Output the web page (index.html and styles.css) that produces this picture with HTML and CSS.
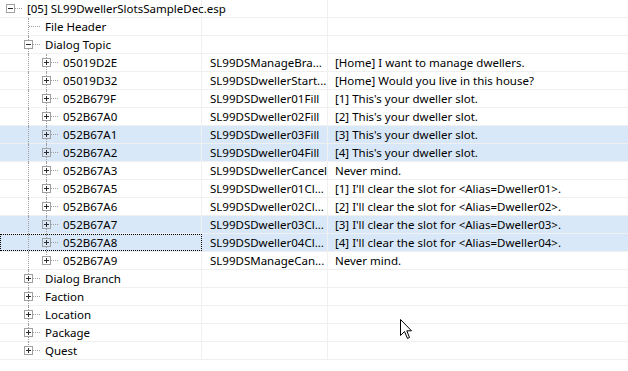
FILE: index.html
```html
<!DOCTYPE html>
<html lang="en">
<head>
    <meta charset="UTF-8">
    <title>SL99DwellerSlotsSampleDec.esp</title>
    <link rel="stylesheet" href="styles.css">
</head>
<body>

<div class="tree-view">
    <div class="row">
        <div class="c tree"><span class="node root"><span class="box minus"></span></span><span class="lbl">[05] SL99DwellerSlotsSampleDec.esp</span></div>
        <div class="c"></div><div class="c"></div>
    </div>
    <div class="row">
        <div class="c tree"><span class="ind"></span><span class="node"></span><span class="lbl">File Header</span></div>
        <div class="c"></div><div class="c"></div>
    </div>
    <div class="row">
        <div class="c tree"><span class="ind"></span><span class="node"><span class="box minus"></span></span><span class="lbl">Dialog Topic</span></div>
        <div class="c"></div><div class="c"></div>
    </div>

    <div class="row">
        <div class="c tree"><span class="ind"></span><span class="ind line"></span><span class="node"><span class="box"></span></span><span class="lbl">05019D2E</span></div>
        <div class="c">SL99DSManageBra...</div><div class="c">[Home] I want to manage dwellers.</div>
    </div>
    <div class="row">
        <div class="c tree"><span class="ind"></span><span class="ind line"></span><span class="node"><span class="box"></span></span><span class="lbl">05019D32</span></div>
        <div class="c">SL99DSDwellerStart...</div><div class="c">[Home] Would you live in this house?</div>
    </div>
    <div class="row">
        <div class="c tree"><span class="ind"></span><span class="ind line"></span><span class="node"><span class="box"></span></span><span class="lbl">052B679F</span></div>
        <div class="c">SL99DSDweller01Fill</div><div class="c">[1] This's your dweller slot.</div>
    </div>
    <div class="row">
        <div class="c tree"><span class="ind"></span><span class="ind line"></span><span class="node"><span class="box"></span></span><span class="lbl">052B67A0</span></div>
        <div class="c">SL99DSDweller02Fill</div><div class="c">[2] This's your dweller slot.</div>
    </div>
    <div class="row sel">
        <div class="c tree"><span class="ind"></span><span class="ind line"></span><span class="node"><span class="box"></span></span><span class="lbl">052B67A1</span></div>
        <div class="c">SL99DSDweller03Fill</div><div class="c">[3] This's your dweller slot.</div>
    </div>
    <div class="row sel">
        <div class="c tree"><span class="ind"></span><span class="ind line"></span><span class="node"><span class="box"></span></span><span class="lbl">052B67A2</span></div>
        <div class="c">SL99DSDweller04Fill</div><div class="c">[4] This's your dweller slot.</div>
    </div>
    <div class="row">
        <div class="c tree"><span class="ind"></span><span class="ind line"></span><span class="node"><span class="box"></span></span><span class="lbl">052B67A3</span></div>
        <div class="c">SL99DSDwellerCancel</div><div class="c">Never mind.</div>
    </div>
    <div class="row">
        <div class="c tree"><span class="ind"></span><span class="ind line"></span><span class="node"><span class="box"></span></span><span class="lbl">052B67A5</span></div>
        <div class="c">SL99DSDweller01Cl...</div><div class="c">[1] I'll clear the slot for &lt;Alias=Dweller01&gt;.</div>
    </div>
    <div class="row">
        <div class="c tree"><span class="ind"></span><span class="ind line"></span><span class="node"><span class="box"></span></span><span class="lbl">052B67A6</span></div>
        <div class="c">SL99DSDweller02Cl...</div><div class="c">[2] I'll clear the slot for &lt;Alias=Dweller02&gt;.</div>
    </div>
    <div class="row sel">
        <div class="c tree"><span class="ind"></span><span class="ind line"></span><span class="node"><span class="box"></span></span><span class="lbl">052B67A7</span></div>
        <div class="c">SL99DSDweller03Cl...</div><div class="c">[3] I'll clear the slot for &lt;Alias=Dweller03&gt;.</div>
    </div>
    <div class="row sel">
        <div class="c tree focus"><span class="ind"></span><span class="ind line"></span><span class="node"><span class="box"></span></span><span class="lbl">052B67A8</span></div>
        <div class="c">SL99DSDweller04Cl...</div><div class="c">[4] I'll clear the slot for &lt;Alias=Dweller04&gt;.</div>
    </div>
    <div class="row">
        <div class="c tree"><span class="ind"></span><span class="ind line"></span><span class="node last"><span class="box"></span></span><span class="lbl">052B67A9</span></div>
        <div class="c">SL99DSManageCan...</div><div class="c">Never mind.</div>
    </div>

    <div class="row">
        <div class="c tree"><span class="ind"></span><span class="node"><span class="box"></span></span><span class="lbl">Dialog Branch</span></div>
        <div class="c"></div><div class="c"></div>
    </div>
    <div class="row">
        <div class="c tree"><span class="ind"></span><span class="node"><span class="box"></span></span><span class="lbl">Faction</span></div>
        <div class="c"></div><div class="c"></div>
    </div>
    <div class="row">
        <div class="c tree"><span class="ind"></span><span class="node"><span class="box"></span></span><span class="lbl">Location</span></div>
        <div class="c"></div><div class="c"></div>
    </div>
    <div class="row">
        <div class="c tree"><span class="ind"></span><span class="node"><span class="box"></span></span><span class="lbl">Package</span></div>
        <div class="c"></div><div class="c"></div>
    </div>
    <div class="row">
        <div class="c tree"><span class="ind"></span><span class="node last"><span class="box"></span></span><span class="lbl">Quest</span></div>
        <div class="c"></div><div class="c"></div>
    </div>
</div>

<svg class="cursor" width="13" height="21" viewBox="0 0 13 21">
    <path d="M0.5 0.5 L0.5 16.5 L4.5 12.5 L7.5 19.5 L9.5 18.5 L6.8 11.8 L11.5 11.8 Z" fill="#fff" stroke="#000" stroke-width="1" stroke-linejoin="miter"/>
</svg>

</body>
</html>
```

FILE: styles.css
```css
body {
    margin: 0;
    background: #fff;
    font-family: "Noto Sans", "Open Sans", sans-serif;
    font-size: 11.5px;
    color: #000;
}
.tree-view {
    width: 628px;
}
.row {
    --bg: #fff;
    display: grid;
    grid-template-columns: 202px 126px 1fr;
    height: 17px;
    border-bottom: 1px solid #f0f0f0;
    background: var(--bg);
}
.row.sel {
    --bg: #d9e8f8;
}
.c {
    height: 17px;
    line-height: 17px;
    padding-left: 8px;
    white-space: nowrap;
    overflow: hidden;
    border-right: 1px solid #f0f0f0;
}
.c:last-child {
    border-right: none;
    padding-left: 7px;
}
.tree {
    display: flex;
    padding-left: 2px;
    overflow: visible;
    position: relative;
    z-index: 1;
}
.focus {
    outline: 1px dotted #000;
    outline-offset: -1px;
}
.ind {
    width: 18px;
    flex: none;
    position: relative;
}
.ind.line::before {
    content: "";
    position: absolute;
    left: 8px;
    top: 0;
    height: 18px;
    border-left: 1px dotted #a0a0a0;
}
.node {
    width: 25px;
    flex: none;
    position: relative;
}
.node::before {
    content: "";
    position: absolute;
    left: 8px;
    top: 0;
    height: 18px;
    border-left: 1px dotted #a0a0a0;
}
.node.last::before {
    height: 9px;
}
.node.root::before {
    display: none;
}
.node::after {
    content: "";
    position: absolute;
    left: 9px;
    top: 8px;
    width: 11px;
    border-top: 1px dotted #a0a0a0;
}
.box {
    position: absolute;
    left: 4px;
    top: 4px;
    width: 7px;
    height: 7px;
    border: 1px solid #a0a0a0;
    background: var(--bg);
    z-index: 1;
}
.box::before,
.box::after {
    content: "";
    position: absolute;
    background: #2b2b2b;
}
.box::before {
    left: 1px;
    top: 3px;
    width: 5px;
    height: 1px;
}
.box::after {
    left: 3px;
    top: 1px;
    width: 1px;
    height: 5px;
}
.box.minus::after {
    display: none;
}
.lbl {
    white-space: nowrap;
}
.cursor {
    position: absolute;
    left: 400px;
    top: 319px;
}
```
